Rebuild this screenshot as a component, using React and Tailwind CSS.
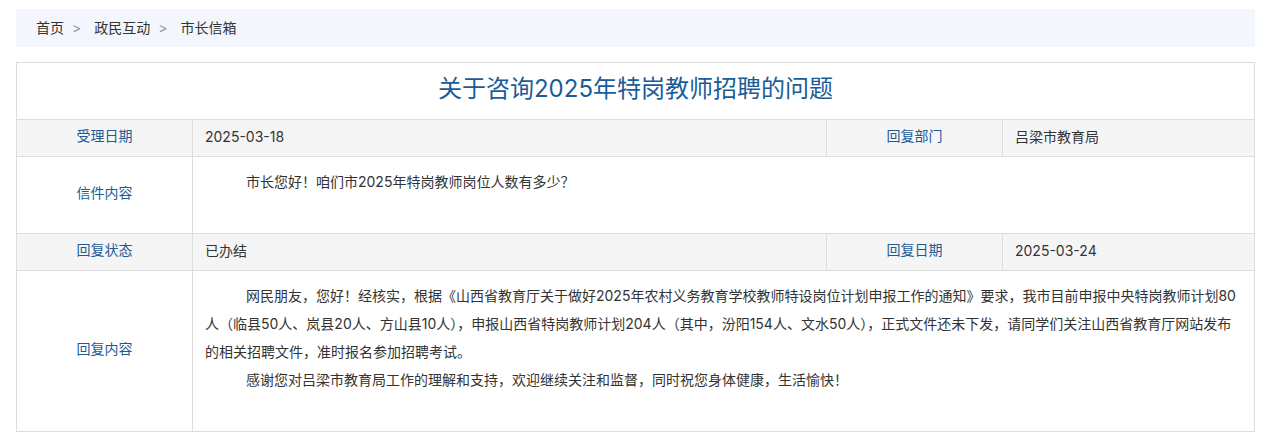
import React from 'react';

const font = { fontFamily: 'Inter, "Noto Sans CJK SC", "Noto Sans", sans-serif' };

const Label = ({ children, className = '' }) => (
    <td className={`border border-[#dddddd] pb-1 text-center align-middle text-[#1b5c98] ${className}`}>{children}</td>
);

const Value = ({ children, className = '', colSpan }) => (
    <td colSpan={colSpan} className={`border border-[#dddddd] px-3 text-[#333333] ${className}`}>{children}</td>
);

const Crumb = () => <span className="ml-[8px] mr-[13px] text-[#999999]">&gt;</span>;

const App = () => {
    return (
        <div className="min-h-screen bg-white px-4 pt-[9px] text-sm" style={font}>
            {/* Breadcrumb */}
            <div className="flex h-[38px] items-center bg-[#f3f7fd] px-5 text-sm text-[#333333]">
                <span>首页</span>
                <Crumb />
                <span>政民互动</span>
                <Crumb />
                <span>市长信箱</span>
            </div>

            <table className="mt-[15px] w-full table-fixed border-collapse border border-[#dddddd]">
                <colgroup>
                    <col className="w-[176px]" />
                    <col className="w-[634px]" />
                    <col className="w-[176px]" />
                    <col />
                </colgroup>
                <tbody>
                    <tr className="h-[57px]">
                        <td colSpan={4} className="border border-[#dddddd] pb-[3px] text-center text-[24px] text-[#1b5c98]">
                            关于咨询2025年特岗教师招聘的问题
                        </td>
                    </tr>
                    <tr className="h-[37px] bg-[#f5f5f5]">
                        <Label>受理日期</Label>
                        <Value className="pb-[2px]">2025-03-18</Value>
                        <Label>回复部门</Label>
                        <Value className="pb-[2px]">吕梁市教育局</Value>
                    </tr>
                    <tr>
                        <Label>信件内容</Label>
                        <Value colSpan={3} className="pt-[11px] pb-[37px] align-top leading-[28px]">
                            <p className="indent-[41px]">市长您好！咱们市2025年特岗教师岗位人数有多少？</p>
                        </Value>
                    </tr>
                    <tr className="h-[37px] bg-[#f5f5f5]">
                        <Label>回复状态</Label>
                        <Value className="pb-[2px]">已办结</Value>
                        <Label>回复日期</Label>
                        <Value className="pb-[2px]">2025-03-24</Value>
                    </tr>
                    <tr>
                        <Label>回复内容</Label>
                        <Value colSpan={3} className="pt-[11px] pb-[37px] align-top leading-[28px]">
                            <p className="indent-[41px]">
                                网民朋友，您好！经核实，根据《山西省教育厅关于做好2025年农村义务教育学校教师特设岗位计划申报工作的通知》要求，我市目前申报中央特岗教师计划80人（临县50人、岚县20人、方山县10人），申报山西省特岗教师计划204人（其中，汾阳154人、文水50人），正式文件还未下发，请同学们关注山西省教育厅网站发布的相关招聘文件，准时报名参加招聘考试。
                            </p>
                            <p className="indent-[41px]">感谢您对吕梁市教育局工作的理解和支持，欢迎继续关注和监督，同时祝您身体健康，生活愉快！</p>
                        </Value>
                    </tr>
                </tbody>
            </table>
        </div>
    );
};

export default App;
